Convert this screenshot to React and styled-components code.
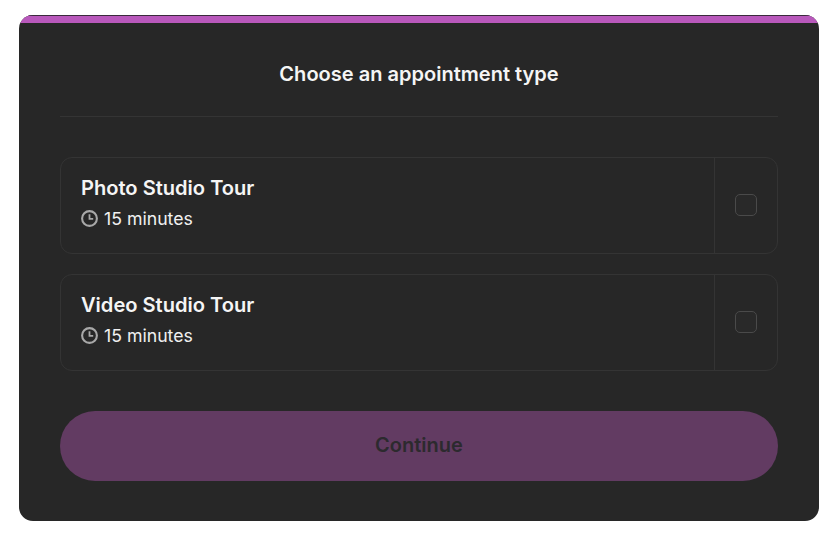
import React from "react";
import styled, { createGlobalStyle } from "styled-components";

const Global = createGlobalStyle`
  html, body { margin: 0; padding: 0; background: #fff; }
  body { font-family: Inter, "Liberation Sans", sans-serif; }
`;

const Page = styled.div`
  padding: 15px 16px 14px 19px;
`;

const Card = styled.section`
  width: 800px;
  height: 506px;
  box-sizing: border-box;
  background: #272727;
  border-radius: 14px;
  overflow: hidden;
  display: flex;
  flex-direction: column;
`;

const Accent = styled.div`
  height: 8px;
  box-sizing: border-box;
  flex: none;
  background: #b858bb;
  border-top: 1px solid #3a2a3c;
`;

const Body = styled.div`
  flex: 1;
  display: flex;
  flex-direction: column;
  padding: 0 41px 40px;
`;

const Header = styled.h1`
  margin: 0;
  height: 94px;
  box-sizing: border-box;
  padding-top: 37px;
  border-bottom: 1px solid #343434;
  color: #f5f5f5;
  font-size: 20.04px;
  line-height: 28px;
  font-weight: 600;
  text-align: center;
`;

const List = styled.div`
  display: flex;
  flex-direction: column;
  gap: 20px;
  margin-top: 40px;
`;

const Row = styled.div`
  display: flex;
  height: 97px;
  box-sizing: border-box;
  border: 1px solid #343434;
  border-radius: 12px;
`;

const Info = styled.div`
  flex: 1;
  display: flex;
  flex-direction: column;
  padding: 18px 20px 0;
`;

const Name = styled.div`
  color: #f5f5f5;
  font-size: 20.08px;
  line-height: 24px;
  font-weight: 600;
`;

const Meta = styled.div`
  display: flex;
  align-items: center;
  gap: 6px;
  margin-top: 7px;
  color: #f0f0f0;
  font-size: 17.7px;
  line-height: 24px;
`;

const Clock = styled.svg`
  width: 17px;
  height: 17px;
  flex: none;
  margin-top: -1px;
  color: #a8a8a8;
`;

const Side = styled.div`
  width: 63px;
  flex: none;
  box-sizing: border-box;
  padding-bottom: 2px;
  display: flex;
  align-items: center;
  justify-content: center;
  border-left: 1px solid #343434;
`;

const Check = styled.div`
  width: 22px;
  height: 22px;
  box-sizing: border-box;
  border: 1px solid #4a4a4a;
  border-radius: 5px;
  background: #292929;
`;

const Button = styled.button`
  margin-top: 40px;
  height: 70px;
  width: 100%;
  border: 0;
  padding: 0 0 2px;
  border-radius: 35px;
  background: #623b62;
  color: #2c2a2e;
  font-family: inherit;
  font-size: 20px;
  font-weight: 600;
`;

const ClockIcon = () => (
  <Clock viewBox="0 0 17 17" fill="none" stroke="currentColor" strokeWidth="2.1" aria-hidden="true">
    <circle cx="8.5" cy="8.5" r="7.4" />
    <path d="M8.5 4.2V8.9H12.2" strokeWidth="1.8" />
  </Clock>
);

const items = ["Photo Studio Tour", "Video Studio Tour"];

export default function App() {
  return (
    <Page>
      <Global />
      <Card>
        <Accent />
        <Body>
          <Header>Choose an appointment type</Header>
          <List>
            {items.map((name) => (
              <Row key={name}>
                <Info>
                  <Name>{name}</Name>
                  <Meta>
                    <ClockIcon />
                    15 minutes
                  </Meta>
                </Info>
                <Side>
                  <Check />
                </Side>
              </Row>
            ))}
          </List>
          <Button disabled>Continue</Button>
        </Body>
      </Card>
    </Page>
  );
}
